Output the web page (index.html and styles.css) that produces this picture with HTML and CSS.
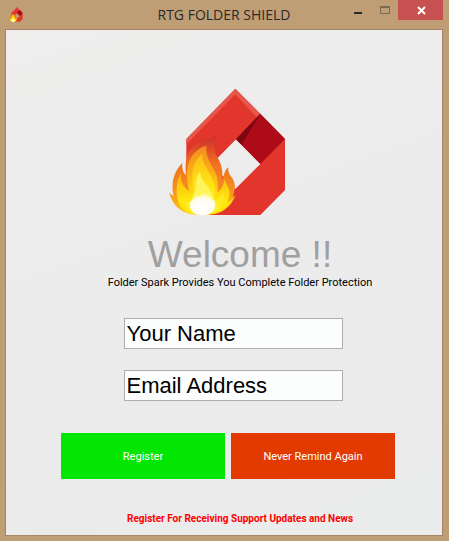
FILE: index.html
```html
<!DOCTYPE html>
<html lang="en">
<head>
<meta charset="utf-8">
<title>RTG FOLDER SHIELD</title>
<link rel="stylesheet" href="styles.css">
</head>
<body>
<svg class="defs" aria-hidden="true">
  <defs>
    <linearGradient id="outer" x1="0" y1="0" x2="0" y2="1">
      <stop offset="0" stop-color="#c62f2a"/><stop offset=".16" stop-color="#e04a27"/><stop offset=".35" stop-color="#f07022"/><stop offset=".65" stop-color="#f68b1f"/><stop offset="1" stop-color="#fccb12"/>
    </linearGradient>
    <linearGradient id="middle" x1="0" y1="0" x2="0" y2="1">
      <stop offset="0" stop-color="#f38a1f"/><stop offset=".4" stop-color="#fbb216"/><stop offset=".8" stop-color="#ffe80a"/><stop offset="1" stop-color="#ffe100"/>
    </linearGradient>
    <linearGradient id="inner" x1="0" y1="0" x2="0" y2="1">
      <stop offset="0" stop-color="#fdbb18"/><stop offset=".5" stop-color="#ffe414"/><stop offset="1" stop-color="#fff22a"/>
    </linearGradient>
    <radialGradient id="core" cx=".5" cy=".7" r=".65">
      <stop offset="0" stop-color="#fff"/><stop offset=".7" stop-color="#fffdf0"/><stop offset="1" stop-color="#fff9a8"/>
    </radialGradient>
    <symbol id="logo" viewBox="0 0 405 435">
      <path fill="#e2352b" fill-rule="evenodd" d="M226 26 375 177V330L301 405H150L79 330V177ZM228 178 155 252 226 327 301 252Z"/>
      <path fill="#e6584d" d="M226 26 79 177V193L226 43 290 112 301 101Z"/>
      <path fill="#ae0b19" d="M301 101 375 177 301 252 228 178Z"/>
      <path fill="#7c0612" d="M301 101 228 178 245 194Z"/>
      <path fill="url(#outer)" d="M168 167C157 202 164 217 178 242C187 260 188 279 187 299C193 291 190 274 205 262C202 282 219 292 223 308C227 324 222 335 219 350C222 350 225 347 228 343C220 368 201 391 172 400C153 406 101 406 82 400C50 390 34 364 27 337C31 342 36 346 41 348C32 310 40 277 67 248C65 266 70 277 78 286C73 240 83 207 110 190C131 177 153 178 168 167Z"/>
      <path fill="url(#middle)" d="M139 197C135 235 160 259 169 284C176 304 171 323 174 337C185 327 193 309 194 294C197 317 212 322 208 347C207 356 203 362 201 367C208 366 215 357 220 354C208 378 192 393 170 399C149 405 106 405 86 399C58 388 51 357 50 335C49 310 56 291 62 279C60 307 74 324 88 334C80 303 79 280 84 257C91 225 111 205 139 197Z"/>
      <path fill="url(#inner)" d="M127 221C123 256 159 278 164 323C167 345 159 358 164 365C172 360 184 346 191 337C193 365 186 390 161 399C142 405 112 405 94 399C76 390 74 371 75 354C82 369 91 367 98 359C107 345 97 320 97 286C97 258 110 233 127 221Z"/>
      <path fill="#fff45c" d="M121 274C119 304 141 309 155 338C170 369 165 393 147 400C137 405 115 405 106 400C86 388 88 365 101 343C111 325 103 295 121 274Z"/>
      <path fill="url(#core)" d="M91 363C99 364 103 352 112 344C118 356 125 341 134 341C149 345 153 355 163 361C169 378 164 393 149 401C140 406 113 406 105 401C92 392 86 377 91 363Z"/>
    </symbol>
  </defs>
</svg>
<div class="window">
  <header class="titlebar">
    <svg class="app-icon" viewBox="25 20 352 390" aria-hidden="true"><use href="#logo" width="405" height="435"/></svg>
    <h1 class="title">RTG FOLDER SHIELD</h1>
    <div class="controls">
      <button class="control" type="button" aria-label="Minimize"><svg viewBox="0 0 26 20"><path fill="#2c2a29" d="M8 12h8v2H8z"/></svg></button>
      <button class="control" type="button" aria-label="Maximize" disabled><svg viewBox="0 0 26 20"><path fill="none" stroke="#7c6a50" d="M8.500 6.500h9v7h-9zM8 7.500h10"/></svg></button>
      <button class="control close" type="button" aria-label="Close"><svg viewBox="0 0 45 20"><path fill="none" stroke="#fff" stroke-width="2" d="m20 7 7 7m0-7-7 7"/></svg></button>
    </div>
  </header>
  <main class="client">
    <svg class="logo" role="img" aria-label="Folder Spark"><use href="#logo"/></svg>
    <div class="intro">
      <h2 class="welcome">Welcome !!</h2>
      <p class="tagline">Folder Spark Provides You Complete Folder Protection</p>
    </div>
    <form class="form">
      <div class="fields">
        <input class="field" type="text" value="Your Name" aria-label="Your Name">
        <input class="field" type="text" value="Email Address" aria-label="Email Address">
      </div>
      <div class="actions">
        <button class="action register" type="button">Register</button>
        <button class="action never" type="button">Never Remind Again</button>
      </div>
    </form>
    <p class="note">Register For Receiving Support Updates and News</p>
  </main>
</div>
</body>
</html>
```
FILE: styles.css
```css
* { box-sizing: border-box; }
body {
  margin: 0;
  background: #bf9d75;
  font-family: Roboto, "Liberation Sans", Arial, sans-serif;
  font-size: 11px;
  color: #000;
}
h1, h2, p { margin: 0; font-weight: 400; }
button { border: 0; padding: 0; font: inherit; }
.defs { position: absolute; width: 0; height: 0; }
.window {
  display: flex;
  flex-direction: column;
  min-height: 100vh;
  padding: 0 6px 5px 5px;
}
.titlebar {
  display: grid;
  grid-template-columns: 97px 1fr 97px;
  height: 29px;
}
.app-icon { width: 14px; height: 15px; margin: 7px 0 0 4px; }
.title {
  font: 14px/29px "Open Sans", "Noto Sans", sans-serif;
  text-align: center;
  color: #2c2a29;
  white-space: nowrap;
}
.controls { display: flex; height: 20px; }
.control { width: 26px; background: transparent; }
.control svg { display: block; width: 100%; height: 20px; }
.close { width: 45px; background: #c75050; }
.client {
  flex: 1;
  display: flex;
  flex-direction: column;
  align-items: center;
  padding: 50px 0 8px 8px;
  border: 1px solid #a48667;
  background: linear-gradient(160deg, #efeeed, #ececec 40%, #ebebeb 80%, #ebeded);
}
.logo { width: 135px; height: 145px; margin-right: 2px; }
.intro { padding-left: 24px; margin-top: 9px; text-align: center; }
.welcome {
  font: 37px/42px "Liberation Sans", Arial, sans-serif;
  color: #a0a0a0;
}
.tagline { line-height: 14px; white-space: nowrap; }
.form { display: flex; flex-direction: column; align-items: center; margin-top: 28px; }
.fields { display: grid; gap: 21px; padding-left: 10px; }
.field {
  width: 219px;
  height: 31px;
  padding: 0 2px;
  border: 1px solid #abadb3;
  border-radius: 0;
  background: #fcfdfd;
  font: 22px "Liberation Sans", Arial, sans-serif;
  color: #000;
}
.actions { display: grid; grid-template-columns: 164px 164px; gap: 6px; margin-top: 32px; }
.action { height: 46px; color: #fff; }
.register { background: #02e602; }
.never { background: #e33a02; }
.note {
  margin-top: auto;
  padding-left: 24px;
  font-size: 10px;
  font-weight: 700;
  line-height: 16px;
  color: #f00;
}
```
